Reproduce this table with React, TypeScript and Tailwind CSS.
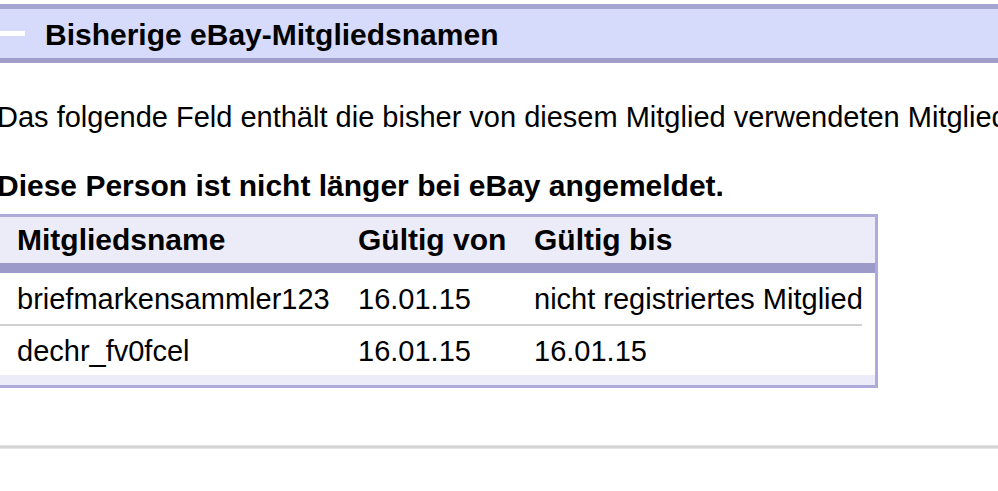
import React from "react";

const rows = [
  { name: "briefmarkensammler123", from: "16.01.15", to: "nicht registriertes Mitglied" },
  { name: "dechr_fv0fcel", from: "16.01.15", to: "16.01.15" },
];

export default function App() {
  return (
    <div className="w-[998px] h-[491px] overflow-hidden bg-white text-black font-['Liberation_Sans',Arial,sans-serif]">
      {/* Section header bar */}
      <div className="mt-[4px] h-[59px] box-border border-t-[5px] border-b-[5px] border-t-[#a6a4d0] border-b-[#9f9dca] bg-[#d6dbfb] flex items-center">
        <div className="w-[25px] h-[5px] bg-white shrink-0" />
        <div className="ml-[20px] text-[30px] font-bold leading-[34px] mt-[3px] whitespace-nowrap">
          Bisherige eBay-Mitgliedsnamen
        </div>
      </div>

      <div className="ml-[-3px]">
        <p className="mt-[37px] text-[29px] leading-[34px] whitespace-nowrap">
          Das folgende Feld enthält die bisher von diesem Mitglied verwendeten Mitgliedsnamen.
        </p>
        <p className="mt-[35px] text-[30px] font-bold leading-[34px] whitespace-nowrap">
          Diese Person ist nicht länger bei eBay angemeldet.
        </p>
      </div>

      {/* Table */}
      <div className="mt-[11px] ml-[-4px] w-[882px] box-border border-[3px] border-[#aeabda] bg-white">
        <div className="grid grid-cols-[342px_176px_358px] h-[46px] bg-[#ececf8] items-center text-[30px] font-bold leading-[34px]">
          <div className="pl-[18px] whitespace-nowrap">Mitgliedsname</div>
          <div className="pl-[17px] whitespace-nowrap">Gültig von</div>
          <div className="pl-[17px] whitespace-nowrap">Gültig bis</div>
        </div>
        <div className="h-[10px] bg-[#9c9ac8]" />
        {rows.map((r, i) => (
          <div key={r.name}>
            <div
              className={
                "grid grid-cols-[342px_176px_358px] items-center text-[29px] leading-[34px] " +
                (i === 0 ? "h-[51px]" : "h-[49px]")
              }
            >
              <div className="pl-[18px] whitespace-nowrap">{r.name}</div>
              <div className="pl-[17px] whitespace-nowrap">{r.from}</div>
              <div className="pl-[17px] whitespace-nowrap">{r.to}</div>
            </div>
            {i === 0 && <div className="h-[2px] mr-[13px] bg-[#d0d0d0]" />}
          </div>
        ))}
        <div className="h-[10px] bg-[#ececf8]" />
      </div>

      {/* Bottom rule */}
      <div className="mt-[57px] h-[4px] border-t border-b border-[#e4e4e4] bg-[#d4d4d4]" />
    </div>
  );
}
